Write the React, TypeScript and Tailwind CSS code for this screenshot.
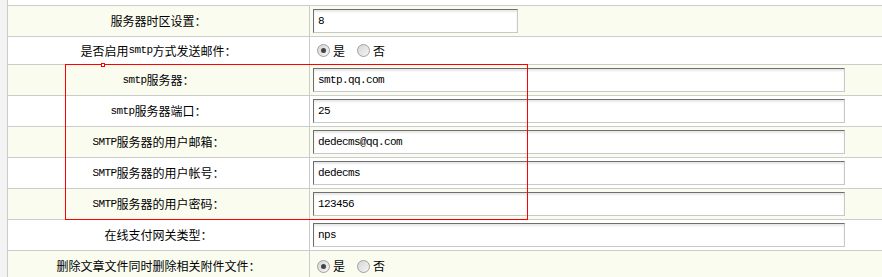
import React from 'react';

const cjk = '"Noto Sans CJK SC", "Noto Sans CJK TC", sans-serif';

const Latin = ({ children }: { children: React.ReactNode }) => (
  <span className="font-['Liberation_Mono'] text-[11px] tracking-[-0.6px]">{children}</span>
);

const TextInput = ({ value, wide = true }: { value: string; wide?: boolean }) => (
  <input
    readOnly
    value={value}
    className={`ml-[3px] h-6 ${wide ? 'w-[532px]' : 'w-[205px]'} border border-t-[#6e6e6e] border-l-[#6e6e6e] border-r-[#c8c8c8] border-b-[#c8c8c8] bg-white pl-1 font-['Liberation_Mono'] text-[11px] tracking-[-0.6px] text-black shadow-[inset_0_2px_2px_#e8e8e8] outline-none`}
  />
);

const Radio = ({ checked }: { checked?: boolean }) => (
  <span className="flex h-[13px] w-[13px] items-center justify-center rounded-full border border-[#a0a0a0] bg-gradient-to-br from-[#d6d6d6] to-[#f4f4f4]">
    {checked && <span className="h-[5px] w-[5px] rounded-full bg-[#444]" />}
  </span>
);

const YesNo = () => (
  <div className="ml-[7px] flex items-center text-[12px] text-black" style={{ fontFamily: cjk }}>
    <Radio checked />
    <span className="ml-[3px] mr-[12px]">是</span>
    <Radio />
    <span className="ml-[3px]">否</span>
  </div>
);

interface RowProps {
  label: React.ReactNode;
  children: React.ReactNode;
  odd?: boolean;
  height?: string;
}

const Row = ({ label, children, odd, height = 'h-[31px]' }: RowProps) => (
  <div className={`flex ${height} border-b border-[#cccccc] ${odd ? 'bg-[#fafcef]' : 'bg-white'}`}>
    <div
      className="flex w-[302px] items-center justify-center border-r border-[#cccccc] text-[12px] text-black"
      style={{ fontFamily: cjk }}
    >
      {label}
    </div>
    <div className="flex flex-1 items-center">{children}</div>
  </div>
);

export default function App() {
  return (
    <div className="relative flex h-[277px] w-[882px] overflow-hidden bg-white">
      <div className="w-[8px] shrink-0 border-r border-[#cccccc] bg-[#f3f3f3]" />
      <div className="flex-1">
        <div className="h-[6px] border-b border-[#cccccc] bg-white" />
        <Row odd label="服务器时区设置：">
          <TextInput value="8" wide={false} />
        </Row>
        <Row height="h-[28px]" label={<>是否启用<Latin>smtp</Latin>方式发送邮件：</>}>
          <YesNo />
        </Row>
        <Row odd label={<><Latin>smtp</Latin>服务器：</>}>
          <TextInput value="smtp.qq.com" />
        </Row>
        <Row label={<><Latin>smtp</Latin>服务器端口：</>}>
          <TextInput value="25" />
        </Row>
        <Row odd label={<><Latin>SMTP</Latin>服务器的用户邮箱：</>}>
          <TextInput value="dedecms@qq.com" />
        </Row>
        <Row label={<><Latin>SMTP</Latin>服务器的用户帐号：</>}>
          <TextInput value="dedecms" />
        </Row>
        <Row odd label={<><Latin>SMTP</Latin>服务器的用户密码：</>}>
          <TextInput value="123456" />
        </Row>
        <Row label="在线支付网关类型：">
          <TextInput value="nps" />
        </Row>
        <Row odd label="删除文章文件同时删除相关附件文件：">
          <YesNo />
        </Row>
      </div>
      <div className="pointer-events-none absolute left-[65px] top-[64px] h-[156px] w-[463px] border border-[#ff0000]" />
      <div className="pointer-events-none absolute left-[101px] top-[63px] h-[4px] w-[4px] border border-[#ff0000] bg-white" />
    </div>
  );
}
